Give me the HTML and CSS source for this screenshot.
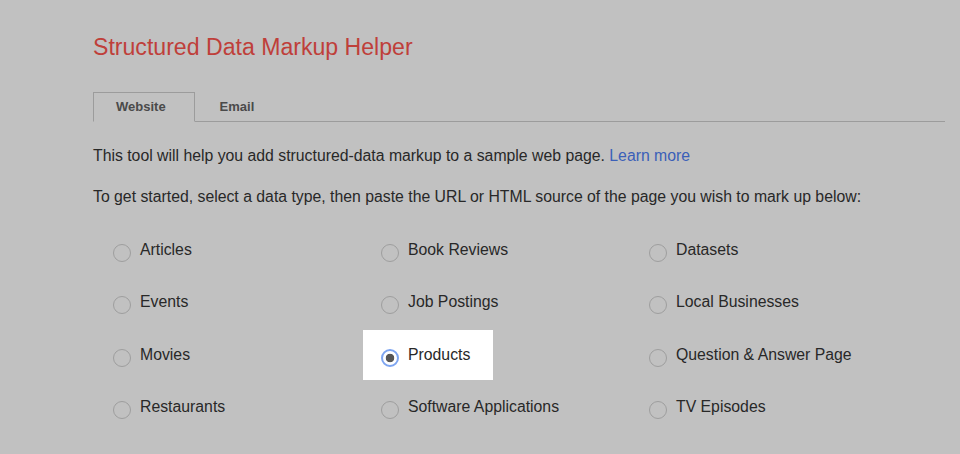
FILE: index.html
```html
<!DOCTYPE html>
<html>
<head>
<meta charset="utf-8">
<link rel="stylesheet" href="styles.css">
</head>
<body>
<div class="page">
  <h1 class="title">Structured Data Markup Helper</h1>
  <div class="tabs">
    <div class="tab active">Website</div>
    <div class="tab">Email</div>
    <div class="tab-fill"></div>
  </div>
  <p class="intro">This tool will help you add structured-data markup to a sample web page. <a class="link" href="#">Learn more</a></p>
  <p class="intro second">To get started, select a data type, then paste the URL or HTML source of the page you wish to mark up below:</p>
  <div class="options">
    <div class="opt"><span class="radio"></span><span>Articles</span></div>
    <div class="opt"><span class="radio"></span><span>Book Reviews</span></div>
    <div class="opt"><span class="radio"></span><span>Datasets</span></div>
    <div class="opt"><span class="radio"></span><span>Events</span></div>
    <div class="opt"><span class="radio"></span><span>Job Postings</span></div>
    <div class="opt"><span class="radio"></span><span>Local Businesses</span></div>
    <div class="opt"><span class="radio"></span><span>Movies</span></div>
    <div class="opt selected"><span class="radio checked"></span><span>Products</span></div>
    <div class="opt"><span class="radio"></span><span>Question &amp; Answer Page</span></div>
    <div class="opt"><span class="radio"></span><span>Restaurants</span></div>
    <div class="opt"><span class="radio"></span><span>Software Applications</span></div>
    <div class="opt"><span class="radio"></span><span>TV Episodes</span></div>
  </div>
</div>
</body>
</html>
```
FILE: styles.css
```css
html, body {
  margin: 0;
  padding: 0;
  background: #c1c1c1;
}
body {
  font-family: "Liberation Sans", Arial, sans-serif;
  color: #282828;
  width: 960px;
  height: 454px;
  overflow: hidden;
}
.page {
  padding: 34px 15px 0 93px;
}
.title {
  margin: 0;
  font-size: 23.1px;
  font-weight: normal;
  color: #bf3f3a;
  line-height: 26px;
}
.tabs {
  display: flex;
  margin-top: 32px;
  height: 30px;
}
.tab {
  font-size: 13px;
  font-weight: bold;
  color: #4a4a4a;
  line-height: 29px;
  padding: 0 25px 0 25px;
  border-bottom: 1px solid #9c9c9c;
}
.tab.active {
  border: 1px solid #9c9c9c;
  border-bottom-color: transparent;
  padding: 0 28px 0 22px;
  line-height: 28px;
}
.tab-fill {
  flex: 1;
  border-bottom: 1px solid #9c9c9c;
}
.intro {
  margin: 25px 0 0;
  font-size: 15.8px;
  line-height: 18px;
}
.intro.second {
  margin-top: 23px;
}
.link {
  color: #3b5fb8;
  text-decoration: none;
}
.options {
  display: grid;
  grid-template-columns: 268px 268px 268px;
  grid-auto-rows: 52.3px;
  margin: 21px 0 0 20px;
}
.opt {
  display: flex;
  align-items: center;
  gap: 9px;
  font-size: 15.8px;
  height: 52px;
  align-self: start;
  position: relative;
}
.opt > span:last-child {
  position: relative;
  top: -3px;
}
.radio {
  border: 1.5px solid #9e9e9e;
  border-radius: 50%;
  flex: none;
  box-sizing: border-box;
  width: 18px;
  height: 18px;
}
.opt.selected {
  z-index: 0;
}
.opt.selected::before {
  content: "";
  position: absolute;
  left: -18px;
  top: -2px;
  width: 130px;
  height: 50px;
  background: #ffffff;
  z-index: -1;
}
.radio.checked {
  border: 2px solid #7ea5f0;
  background: radial-gradient(circle, #555 0 4px, #fff 4.6px);
}
```
